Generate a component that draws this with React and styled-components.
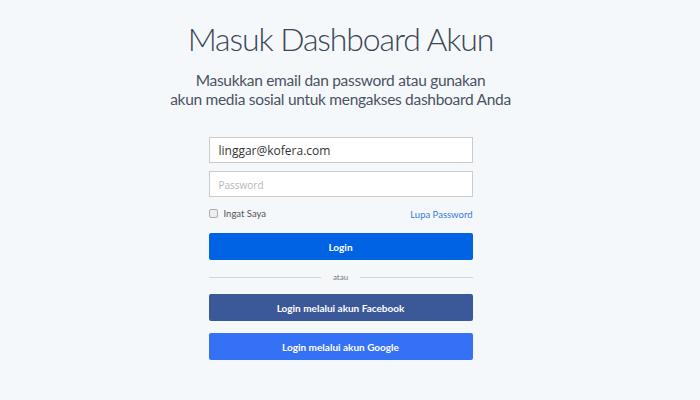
import styled, { createGlobalStyle } from "styled-components";

const Global = createGlobalStyle`
  html, body {
    margin: 0;
    background: #f5f8fb;
  }
  * { box-sizing: border-box; }
`;

const Page = styled.div`
  width: 681px;
  height: 400px;
  display: flex;
  flex-direction: column;
  align-items: center;
  padding-top: 19px;
  font-family: Lato, "Open Sans", sans-serif;
`;

const Title = styled.h1`
  margin: 0;
  font-weight: 300;
  font-size: 32px;
  line-height: 40px;
  letter-spacing: -1.1px;
  color: #3b4656;
`;

const Sub = styled.p`
  margin: 12px 0 0;
  font-weight: 400;
  font-size: 15.5px;
  line-height: 19px;
  letter-spacing: -0.3px;
  text-align: center;
  color: #4a5362;
`;

const Form = styled.form`
  width: 264px;
  margin-top: 28px;
  display: flex;
  flex-direction: column;
`;

const Input = styled.input`
  height: 26px;
  width: 100%;
  border: 1px solid #c9cccf;
  background: #fff;
  padding: 0 9px;
  font-family: "Open Sans", sans-serif;
  font-size: 12px;
  color: #333;
  margin-bottom: 8px;
  outline: none;
  &::placeholder { color: #b4b7ba; font-size: 10px; }
`;

const Row = styled.div`
  display: flex;
  justify-content: space-between;
  align-items: center;
  margin: 1px 0 13px;
  font-size: 9.5px;
`;

const Check = styled.label`
  display: flex;
  align-items: center;
  gap: 6px;
  color: #555;
`;

const Box = styled.span`
  width: 9px;
  height: 9px;
  border: 1px solid #a9acaf;
  border-radius: 2px;
  background: #eee;
`;

const Link = styled.a`
  color: #3a7bd5;
  margin-top: 3px;
`;

const Button = styled.button`
  height: 27px;
  width: 100%;
  border: none;
  border-radius: 2px;
  background: ${(p) => p.$bg};
  color: #fff;
  font-family: Lato, sans-serif;
  font-weight: 700;
  font-size: 10px;
`;

const Divider = styled.div`
  display: flex;
  align-items: center;
  gap: 12px;
  margin: 12px 0 12px;
  font-size: 8px;
  color: #777;
  &::before, &::after {
    content: "";
    flex: 1;
    height: 1px;
    background: #d4d6d8;
  }
`;

const Stack = styled.div`
  display: flex;
  flex-direction: column;
  gap: 12px;
`;

export default function App() {
  return (
    <>
      <Global />
      <Page>
        <Title>Masuk Dashboard Akun</Title>
        <Sub>
          Masukkan email dan password atau gunakan
          <br />
          akun media sosial untuk mengakses dashboard Anda
        </Sub>
        <Form onSubmit={(e) => e.preventDefault()}>
          <Input defaultValue="linggar@kofera.com" />
          <Input type="password" placeholder="Password" />
          <Row>
            <Check>
              <Box />
              Ingat Saya
            </Check>
            <Link>Lupa Password</Link>
          </Row>
          <Button $bg="#0063e3">Login</Button>
          <Divider>atau</Divider>
          <Stack>
            <Button $bg="#3b5998">Login melalui akun Facebook</Button>
            <Button $bg="#3571f5">Login melalui akun Google</Button>
          </Stack>
        </Form>
      </Page>
    </>
  );
}
